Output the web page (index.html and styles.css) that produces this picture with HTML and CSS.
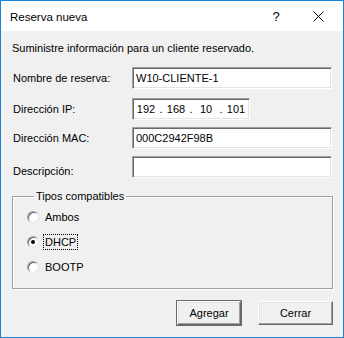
FILE: index.html
```html
<!DOCTYPE html>
<html lang="es">
<head>
  <meta charset="UTF-8">
  <title>Reserva nueva</title>
  <link rel="stylesheet" href="styles.css">
</head>
<body>
  <div class="window">
    <div class="titlebar">
      <span class="title">Reserva nueva</span>
      <span class="help">?</span>
      <span class="close">
        <svg width="11" height="11" viewBox="0 0 11 11"><path d="M0.5 0.5 L10.5 10.5 M10.5 0.5 L0.5 10.5" stroke="#000" stroke-width="1" fill="none"/></svg>
      </span>
    </div>

    <div class="content">
      <p class="intro">Suministre información para un cliente reservado.</p>

      <div class="form">
        <div class="row first">
          <label>Nombre de reserva:</label>
          <div class="field wide">W10-CLIENTE-1</div>
        </div>
        <div class="row">
          <label>Dirección IP:</label>
          <div class="field ip">
            <span class="seg">192</span><span class="dot">.</span>
            <span class="seg">168</span><span class="dot">.</span>
            <span class="seg">10</span><span class="dot">.</span>
            <span class="seg">101</span>
          </div>
        </div>
        <div class="row">
          <label>Dirección MAC:</label>
          <div class="field wide">000C2942F98B</div>
        </div>
        <div class="row">
          <label class="low">Descripción:</label>
          <div class="field wide"></div>
        </div>
      </div>

      <fieldset class="group">
        <legend>Tipos compatibles</legend>
        <div class="radio"><span class="circle"></span><span class="rlabel">Ambos</span></div>
        <div class="radio"><span class="circle checked"></span><span class="rlabel focus">DHCP</span></div>
        <div class="radio"><span class="circle"></span><span class="rlabel">BOOTP</span></div>
      </fieldset>

      <div class="buttons">
        <button class="btn default">Agregar</button>
        <button class="btn cancel">Cerrar</button>
      </div>
    </div>
  </div>
</body>
</html>
```

FILE: styles.css
```css
* { margin: 0; padding: 0; box-sizing: border-box; }
body { font-family: 'Liberation Sans', Arial, sans-serif; font-size: 11px; color: #000; background: #f0f0f0; }
.window { width: 344px; height: 338px; border: 1px solid #1883d7; background: #f0f0f0; display: flex; flex-direction: column; }
.titlebar { height: 30px; background: #fff; display: flex; align-items: center; padding-left: 9px; }
.title { font-size: 11.5px; flex: 1; padding-top: 1px; }
.help { font-size: 13px; width: 46px; text-align: center; margin-right: 4px; }
.close { width: 40px; display: flex; justify-content: center; padding-right: 10px; }
.close svg { display: block; }
.content { padding: 10px 10px 0 11px; flex: 1; display: flex; flex-direction: column; }
.intro { line-height: 14px; }
.form { margin-top: 12px; display: flex; flex-direction: column; gap: 7px; }
.row { display: flex; align-items: center; height: 22px; }
.row.first { margin-bottom: 2px; }
.row label { width: 120px; padding-left: 1px; }
.row label.low { padding-top: 7px; }
.field { height: 22px; background: #fff; border: 1px solid; border-color: #a0a0a0 #fff #fff #a0a0a0; box-shadow: inset 1px 1px 0 #696969, inset -1px -1px 0 #e3e3e3; padding: 0 3px; line-height: 20px; }
.field.wide { width: 200px; }
.field.ip { width: 118px; display: flex; padding: 0 1px; }
.seg { width: 24px; text-align: center; }
.dot { width: 6px; text-align: center; }
.group { margin-top: 11px; border: 1px solid #a0a0a0; box-shadow: 1px 1px 0 #fff, inset 1px 1px 0 #fff; padding: 6px 14px 13px 14px; width: 321px; display: flex; flex-direction: column; gap: 9px; }
.group legend { margin-left: 7px; padding: 0 2px; line-height: 14px; }
.radio { display: flex; align-items: center; height: 16px; }
.circle { width: 12px; height: 12px; border-radius: 50%; background: #fff; border: 1px solid; border-color: #a0a0a0 #e3e3e3 #e3e3e3 #a0a0a0; box-shadow: inset 1px 1px 0 #696969; margin-right: 4px; display: flex; align-items: center; justify-content: center; }
.circle.checked::after { content: ""; width: 4px; height: 4px; border-radius: 50%; background: #000; }
.rlabel { padding: 0 1px; line-height: 14px; border: 1px solid transparent; }
.rlabel.focus { border: 1px dotted #000; }
.buttons { margin-top: 12px; display: flex; justify-content: flex-end; gap: 17px; padding-right: 0; }
.btn { font-family: 'Liberation Sans', Arial, sans-serif; font-size: 11px; height: 24px; background: #f0f0f0; border: 1px solid; border-color: #fff #696969 #696969 #fff; box-shadow: inset -1px -1px 0 #a0a0a0, inset 1px 1px 0 #e3e3e3; }
.btn.default { width: 64px; outline: 1px solid #696969; }
.btn.cancel { width: 75px; }
```
